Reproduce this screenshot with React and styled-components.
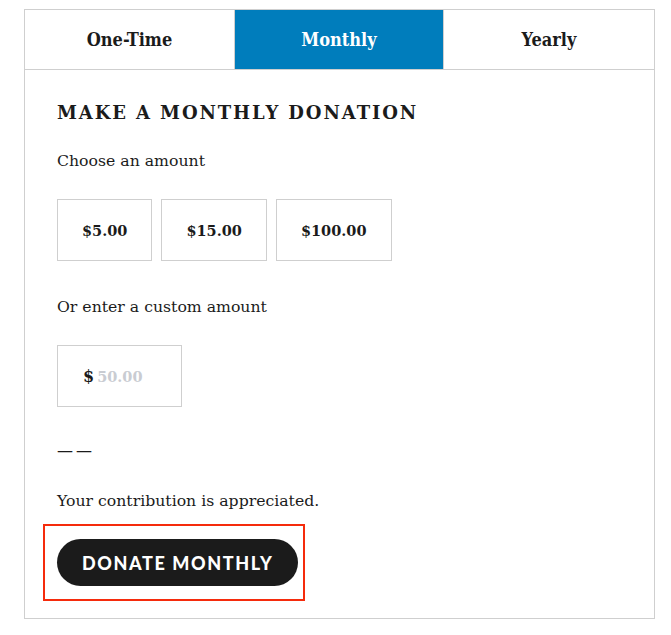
import React, { useState } from 'react'
import styled, { createGlobalStyle } from 'styled-components'

const GlobalStyle = createGlobalStyle`
  html, body {
    margin: 0;
    padding: 0;
    background: #ffffff;
  }
`

const tabs = ['One-Time', 'Monthly', 'Yearly']
const amounts = ['$5.00', '$15.00', '$100.00']

const App = () => {
  const [active, setActive] = useState('Monthly')

  return (
    <Page>
      <GlobalStyle />
      <Card>
        <TabBar>
          {tabs.map((t) => (
            <Tab key={t} $active={active === t} onClick={() => setActive(t)}>
              {t}
            </Tab>
          ))}
        </TabBar>

        <Body>
          <Heading>Make a monthly donation</Heading>
          <Label>Choose an amount</Label>
          <Amounts>
            {amounts.map((a) => (
              <AmountButton key={a}>{a}</AmountButton>
            ))}
          </Amounts>

          <Label>Or enter a custom amount</Label>
          <CustomBox>
            <Dollar>$</Dollar>
            <CustomInput placeholder="50.00" />
          </CustomBox>

          <Dash>——</Dash>
          <Thanks>Your contribution is appreciated.</Thanks>

          <FocusRing>
            <DonateButton>Donate Monthly</DonateButton>
          </FocusRing>
        </Body>
      </Card>
    </Page>
  )
}

const serif = `"DejaVu Serif", "Liberation Serif", serif`

const Page = styled.div`
  padding: 9px 0 0 24px;
  font-family: ${serif};
  color: #1b1b1b;
`

const Card = styled.div`
  width: 629px;
  border: 1px solid #cfcfcf;
  height: 608px;
  box-sizing: content-box;
`

const TabBar = styled.div`
  display: grid;
  grid-template-columns: 209px 209px 1fr;
  height: 59px;
  border-bottom: 1px solid #cfcfcf;
`

const Tab = styled.div`
  display: flex;
  align-items: center;
  justify-content: center;
  font-family: ${serif};
  font-stretch: condensed;
  font-weight: 700;
  font-size: 18px;
  cursor: pointer;
  background: ${(p) => (p.$active ? '#007dbc' : '#ffffff')};
  color: ${(p) => (p.$active ? '#ffffff' : '#1b1b1b')};
  & + & {
    border-left: 1px solid #cfcfcf;
  }
`

const Body = styled.div`
  padding: 31px 32px 0 32px;
`

const Heading = styled.h2`
  margin: 0;
  font-family: ${serif};
  font-size: 18px;
  font-weight: 700;
  text-transform: uppercase;
  letter-spacing: 1.9px;
  line-height: 24px;
`

const Label = styled.p`
  margin: 25px 0 0;
  font-size: 15.7px;
  line-height: 22px;
`

const Amounts = styled.div`
  display: flex;
  gap: 9px;
  margin-top: 27px;
  margin-bottom: 35px;
`

const AmountButton = styled.button`
  height: 62px;
  padding: 0 24px;
  background: #ffffff;
  border: 1px solid #cfcfcf;
  font-family: ${serif};
  font-weight: 700;
  font-size: 14.5px;
  color: #1b1b1b;
`

const CustomBox = styled.label`
  display: flex;
  align-items: center;
  width: 125px;
  height: 62px;
  margin-top: 27px;
  border: 1px solid #cfcfcf;
  padding-left: 25px;
  box-sizing: border-box;
`

const Dollar = styled.span`
  font-weight: 700;
  font-size: 16px;
  margin-right: 3px;
`

const CustomInput = styled.input`
  width: 70px;
  border: none;
  outline: none;
  padding: 0;
  font-family: ${serif};
  font-weight: 700;
  font-size: 14.5px;
  &::placeholder {
    color: #c9ccd2;
  }
`

const Dash = styled.div`
  margin-top: 33px;
  font-size: 16px;
  line-height: 22px;
  letter-spacing: 3px;
`

const Thanks = styled.p`
  margin: 28px 0 0;
  font-size: 15.7px;
  line-height: 22px;
`

const FocusRing = styled.div`
  display: inline-block;
  margin: 12px 0 0 -14px;
  padding: 13px 5px 13px 12px;
  border: 2px solid #f52b0c;
`

const DonateButton = styled.button`
  height: 47px;
  padding: 0 25px;
  border: none;
  border-radius: 24px;
  background: #1b1b1b;
  color: #ffffff;
  font-family: Lato, "DejaVu Sans", sans-serif;
  font-weight: 900;
  font-size: 18px;
  letter-spacing: 1.6px;
  text-transform: uppercase;
  cursor: pointer;
`

export default App
